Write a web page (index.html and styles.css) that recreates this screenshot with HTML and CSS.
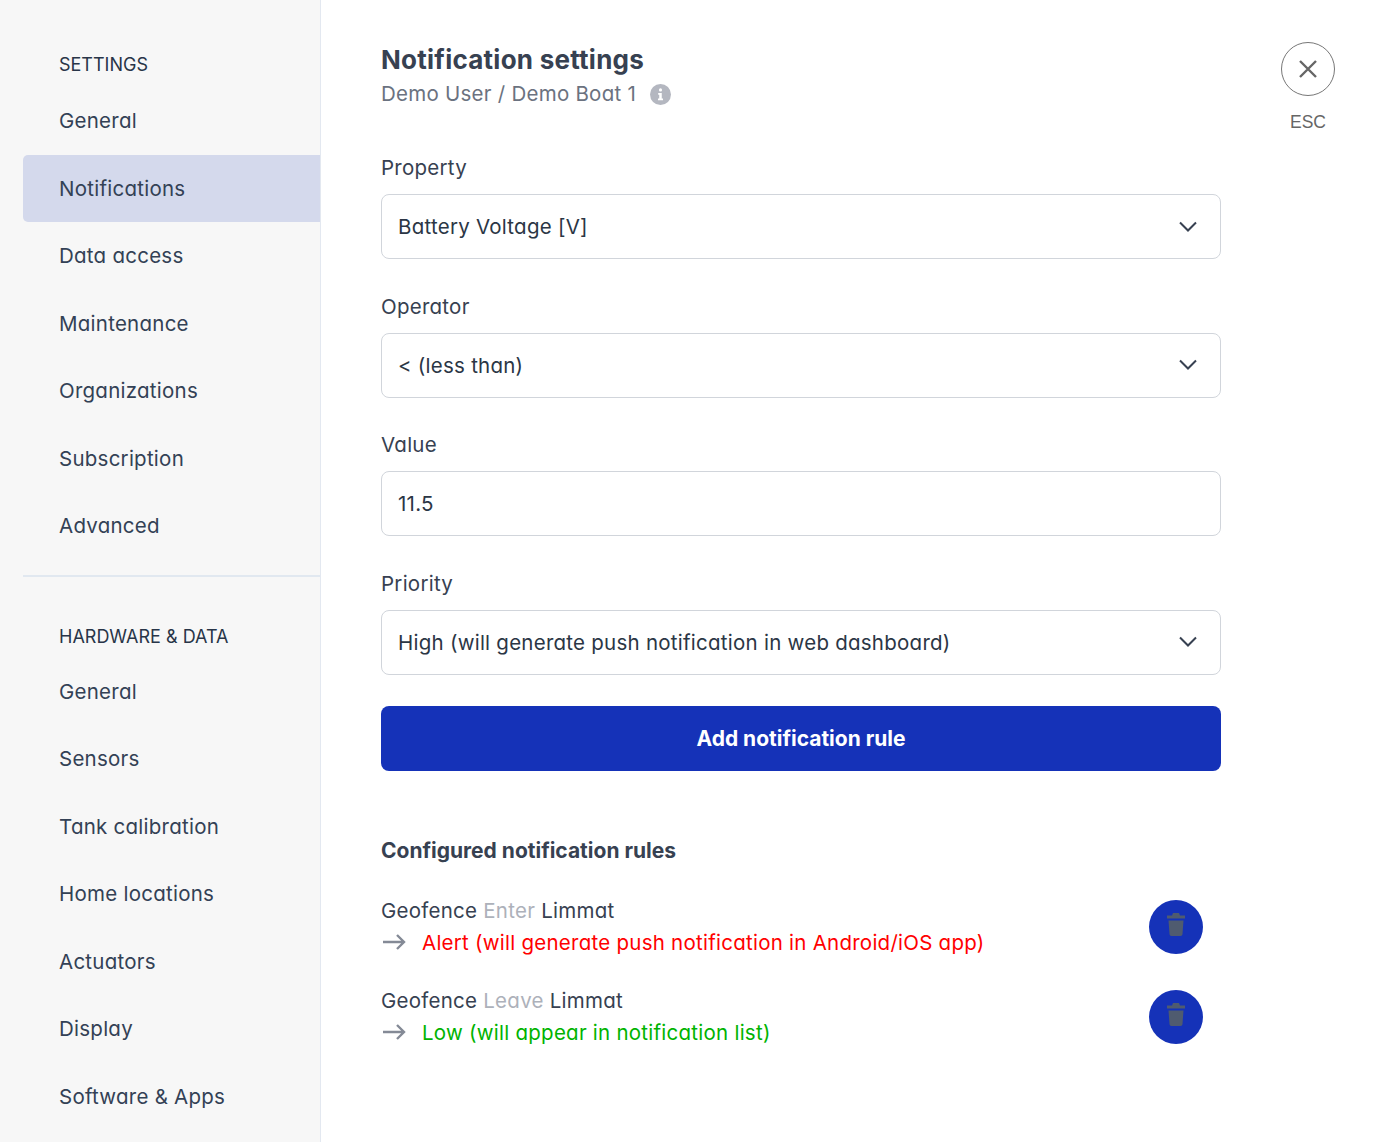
FILE: index.html
```html
<!DOCTYPE html>
<html lang="en">
<head>
<meta charset="utf-8">
<title>Notification settings</title>
<link rel="stylesheet" href="styles.css">
</head>
<body>
<div class="app">
  <aside class="sidebar">
    <h2 class="nav-heading">SETTINGS</h2>
    <nav class="nav">
      <a class="nav-item">General</a>
      <a class="nav-item active">Notifications</a>
      <a class="nav-item">Data access</a>
      <a class="nav-item">Maintenance</a>
      <a class="nav-item">Organizations</a>
      <a class="nav-item">Subscription</a>
      <a class="nav-item">Advanced</a>
    </nav>
    <hr class="nav-divider">
    <h2 class="nav-heading second">HARDWARE &amp; DATA</h2>
    <nav class="nav">
      <a class="nav-item">General</a>
      <a class="nav-item">Sensors</a>
      <a class="nav-item">Tank calibration</a>
      <a class="nav-item">Home locations</a>
      <a class="nav-item">Actuators</a>
      <a class="nav-item">Display</a>
      <a class="nav-item">Software &amp; Apps</a>
    </nav>
  </aside>
  <main class="main">
    <div class="content">
      <header class="page-head">
        <h1 class="title">Notification settings</h1>
        <p class="subtitle">Demo User / Demo Boat 1
          <svg class="info" viewBox="0 0 20 20" aria-hidden="true"><circle cx="10" cy="10" r="10" fill="#b4b7c0"/><circle cx="10" cy="5.6" r="1.5" fill="#fff"/><path d="M7.8 8.5h3.4v5.3h1.2v1.7H7.6v-1.7h1.2v-3.6h-1z" fill="#fff"/></svg>
        </p>
      </header>
      <div class="field">
        <label class="label">Property</label>
        <div class="control">Battery Voltage [V]
          <svg class="chev" viewBox="0 0 20 12" aria-hidden="true"><path d="M2 1.5l8 8 8-8" fill="none" stroke="#374151" stroke-width="2"/></svg>
        </div>
      </div>
      <div class="field">
        <label class="label">Operator</label>
        <div class="control">&lt; (less than)
          <svg class="chev" viewBox="0 0 20 12" aria-hidden="true"><path d="M2 1.5l8 8 8-8" fill="none" stroke="#374151" stroke-width="2"/></svg>
        </div>
      </div>
      <div class="field">
        <label class="label">Value</label>
        <div class="control">11.5</div>
      </div>
      <div class="field last">
        <label class="label">Priority</label>
        <div class="control">High (will generate push notification in web dashboard)
          <svg class="chev" viewBox="0 0 20 12" aria-hidden="true"><path d="M2 1.5l8 8 8-8" fill="none" stroke="#374151" stroke-width="2"/></svg>
        </div>
      </div>
      <button class="primary">Add notification rule</button>
      <h3 class="rules-title">Configured notification rules</h3>
      <div class="rule">
        <div class="rule-text">
          <div class="rule-line">Geofence <span class="muted">Enter</span> Limmat</div>
          <div class="rule-line">
            <svg class="arrow" viewBox="0 0 24 16" aria-hidden="true"><path d="M1 8h21M15 1l7 7-7 7" fill="none" stroke="#848a96" stroke-width="2.4"/></svg>
            <span class="alert">Alert (will generate push notification in Android/iOS app)</span>
          </div>
        </div>
        <button class="round">
          <svg class="trash" viewBox="0 0 18 23" aria-hidden="true"><path d="M6 0h6l1 2.5h5v3H0v-3h5zM1.5 7.5h15l-1 13.5c-.1 1.2-.8 2-2 2h-9c-1.2 0-1.9-.8-2-2z" fill="#4f5b6f"/></svg>
        </button>
      </div>
      <div class="rule">
        <div class="rule-text">
          <div class="rule-line">Geofence <span class="muted">Leave</span> Limmat</div>
          <div class="rule-line">
            <svg class="arrow" viewBox="0 0 24 16" aria-hidden="true"><path d="M1 8h21M15 1l7 7-7 7" fill="none" stroke="#848a96" stroke-width="2.4"/></svg>
            <span class="low">Low (will appear in notification list)</span>
          </div>
        </div>
        <button class="round">
          <svg class="trash" viewBox="0 0 18 23" aria-hidden="true"><path d="M6 0h6l1 2.5h5v3H0v-3h5zM1.5 7.5h15l-1 13.5c-.1 1.2-.8 2-2 2h-9c-1.2 0-1.9-.8-2-2z" fill="#4f5b6f"/></svg>
        </button>
      </div>
    </div>
    <div class="close-wrap">
      <button class="close">
        <svg viewBox="0 0 20 20" aria-hidden="true"><path d="M2 2l16 16M18 2L2 18" fill="none" stroke="#666" stroke-width="2.4"/></svg>
      </button>
      <span class="esc">ESC</span>
    </div>
  </main>
</div>
</body>
</html>
```
FILE: styles.css
```css
* { box-sizing: border-box; }
html, body { margin: 0; height: 100%; overflow: hidden; }
body {
  font-family: "Inter", "Liberation Sans", sans-serif;
  font-size: 20px;
  color: #1f2937;
  background: #fff;
}
.app { display: flex; height: 1142px; overflow: hidden; }
.sidebar {
  width: 321px;
  flex: none;
  background: #f7f7f7;
  border-right: 1px solid #e3e8f0;
  padding: 49px 0 0 23px;
}
.nav-heading {
  margin: 0 0 6.5px;
  padding-left: 36px;
  height: 32px;
  line-height: 32px;
  font-size: 18px;
  font-weight: 400;
  color: #283548;
}
.nav-heading.second { margin: 43.5px 0 5.5px; }
.nav { display: flex; flex-direction: column; gap: 0.5px; }
.nav-item {
  height: 67px;
  flex: none;
  display: flex;
  align-items: center;
  padding: 0 0 0.5px 36px;
  color: #334155;
  font-size: 20.5px;
  font-weight: 400;
  letter-spacing: 0.25px;
  font-feature-settings: "cv11";
}
.nav-item.active { background: #d4d9ec; border-radius: 5px 0 0 5px; }
.nav-divider {
  margin: 15.5px 0 0;
  border: 0;
  height: 2px;
  background: #e1e8f0;
}
.main { flex: 1; display: flex; padding: 0 38px 0 60px; min-width: 0; }
.content { width: 840px; flex: none; }
.page-head { padding-top: 42px; height: 152px; }
.title {
  margin: 0;
  font-size: 26px;
  line-height: 36px;
  font-weight: 700;
  letter-spacing: 0.25px;
  color: #374151;
}
.subtitle {
  margin: 0;
  font-size: 20.5px;
  line-height: 32px;
  letter-spacing: 0.25px;
  font-feature-settings: "cv11";
  color: #6b7280;
  display: flex;
  align-items: center;
}
.info { width: 21px; height: 21px; margin-left: 14px; }
.field { margin-bottom: 31.67px; }
.field.last { margin-bottom: 31px; }
.label {
  display: block;
  height: 32px;
  line-height: 32px;
  margin-bottom: 10px;
  font-size: 20.5px;
  letter-spacing: 0.25px;
  font-feature-settings: "cv11";
  color: #374151;
}
.control {
  height: 65px;
  border: 1px solid #d1d5db;
  border-radius: 8px;
  background: #fff;
  padding: 0 22px 0 16px;
  display: flex;
  align-items: center;
  justify-content: space-between;
  font-size: 20.5px;
  letter-spacing: 0.25px;
  font-feature-settings: "cv11";
  color: #2b3645;
}
.chev { width: 20px; height: 12px; flex: none; }
.primary {
  display: block;
  width: 100%;
  height: 65px;
  border: 0;
  border-radius: 8px;
  background: #1532b8;
  color: #fff;
  font: 700 21px "Inter", "Liberation Sans", sans-serif;
}
.rules-title {
  margin: 61px 0 12px;
  height: 38px;
  line-height: 38px;
  font-size: 21px;
  font-weight: 700;
  color: #374151;
}
.rule { display: flex; align-items: center; justify-content: space-between; height: 90px; padding-right: 18px; }
.rule-line {
  line-height: 32px;
  font-size: 20.5px;
  letter-spacing: 0.25px;
  font-feature-settings: "cv11";
  color: #374151;
  display: flex;
  align-items: center;
  white-space: pre-wrap;
}
.muted { color: #adb1ba; }
.arrow { width: 24px; height: 16px; margin: 0 16px 2px 1px; flex: none; }
.alert { color: #ff0000; }
.low { color: #00b300; }
.round {
  width: 54px;
  height: 54px;
  border: 0;
  border-radius: 50%;
  background: #1532b8;
  padding: 0;
  display: flex;
  align-items: center;
  justify-content: center;
}
.trash { width: 18px; height: 23px; margin-bottom: 4px; }
.close-wrap {
  margin-left: 60px;
  width: 54px;
  padding-top: 42px;
  display: flex;
  flex-direction: column;
  align-items: center;
}
.close {
  width: 54px;
  height: 54px;
  border: 1px solid #777;
  border-radius: 50%;
  background: #fff;
  padding: 0;
  display: flex;
  align-items: center;
  justify-content: center;
}
.close svg { width: 20px; height: 20px; }
.esc {
  margin-top: 13px;
  font: 400 17.5px/26px "Liberation Sans", sans-serif;
  color: #666;
}
```
